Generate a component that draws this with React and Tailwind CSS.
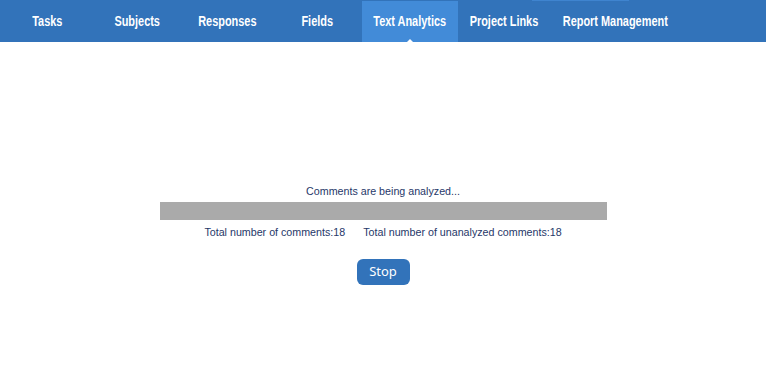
import React from 'react';

const tabs = [
    { id: 'tasks', label: 'Tasks', width: 'w-[90px]' },
    { id: 'subjects', label: 'Subjects', width: 'w-[90px]' },
    { id: 'responses', label: 'Responses', width: 'w-[90px]' },
    { id: 'fields', label: 'Fields', width: 'w-[90px]' },
    { id: 'text', label: 'Text Analytics', width: 'w-[96px]' },
    { id: 'links', label: 'Project Links', width: 'w-[92px]' },
    { id: 'reports', label: 'Report Management', width: 'w-[130px]' },
];

const NavBar = ({ activeTab }) => {
    return (
        <nav className="relative flex h-[42px] bg-[#3273ba] pl-[2px]">
            <div className="absolute left-[532px] top-0 h-px w-[97px] bg-[#3f84cf]" />
            {tabs.map(tab => (
                <div
                    key={tab.id}
                    className={`relative flex items-center justify-center text-[14px] font-bold text-white ${tab.width} ${
                        activeTab === tab.id ? 'mt-px bg-[#428bd8]' : ''
                    }`}
                >
                    <span className={`whitespace-nowrap scale-x-[0.78] ${activeTab === tab.id ? '-mt-px' : ''}`}>
                        {tab.label}
                    </span>
                    {activeTab === tab.id && (
                        <span className="absolute bottom-0 left-1/2 -translate-x-1/2 h-0 w-0 border-x-[3px] border-b-[3px] border-x-transparent border-b-white" />
                    )}
                </div>
            ))}
        </nav>
    );
};

export default function App() {
    return (
        <div className="min-h-[381px] bg-white" style={{ fontFamily: '"Liberation Sans", Arial, sans-serif' }}>
            <NavBar activeTab="text" />
            <main className="flex flex-col items-center pt-[142px]">
                <p className="text-[10.7px] leading-[14px] text-[#1f3869]">
                    Comments are being analyzed...
                </p>
                <div className="mt-[4px] h-[18px] w-[447px] bg-[#aaaaaa]" />
                <div className="mt-[5px] flex gap-[18px] text-[10.7px] leading-[14px] text-[#1f3869]">
                    <span>Total number of comments:18</span>
                    <span>Total number of unanalyzed comments:18</span>
                </div>
                <button
                    className="mt-[20px] h-[26px] w-[53px] rounded-[6px] bg-[#3273ba] text-[13px] text-white"
                    style={{ fontFamily: '"Noto Sans", "Open Sans", sans-serif' }}
                >
                    Stop
                </button>
            </main>
        </div>
    );
}
